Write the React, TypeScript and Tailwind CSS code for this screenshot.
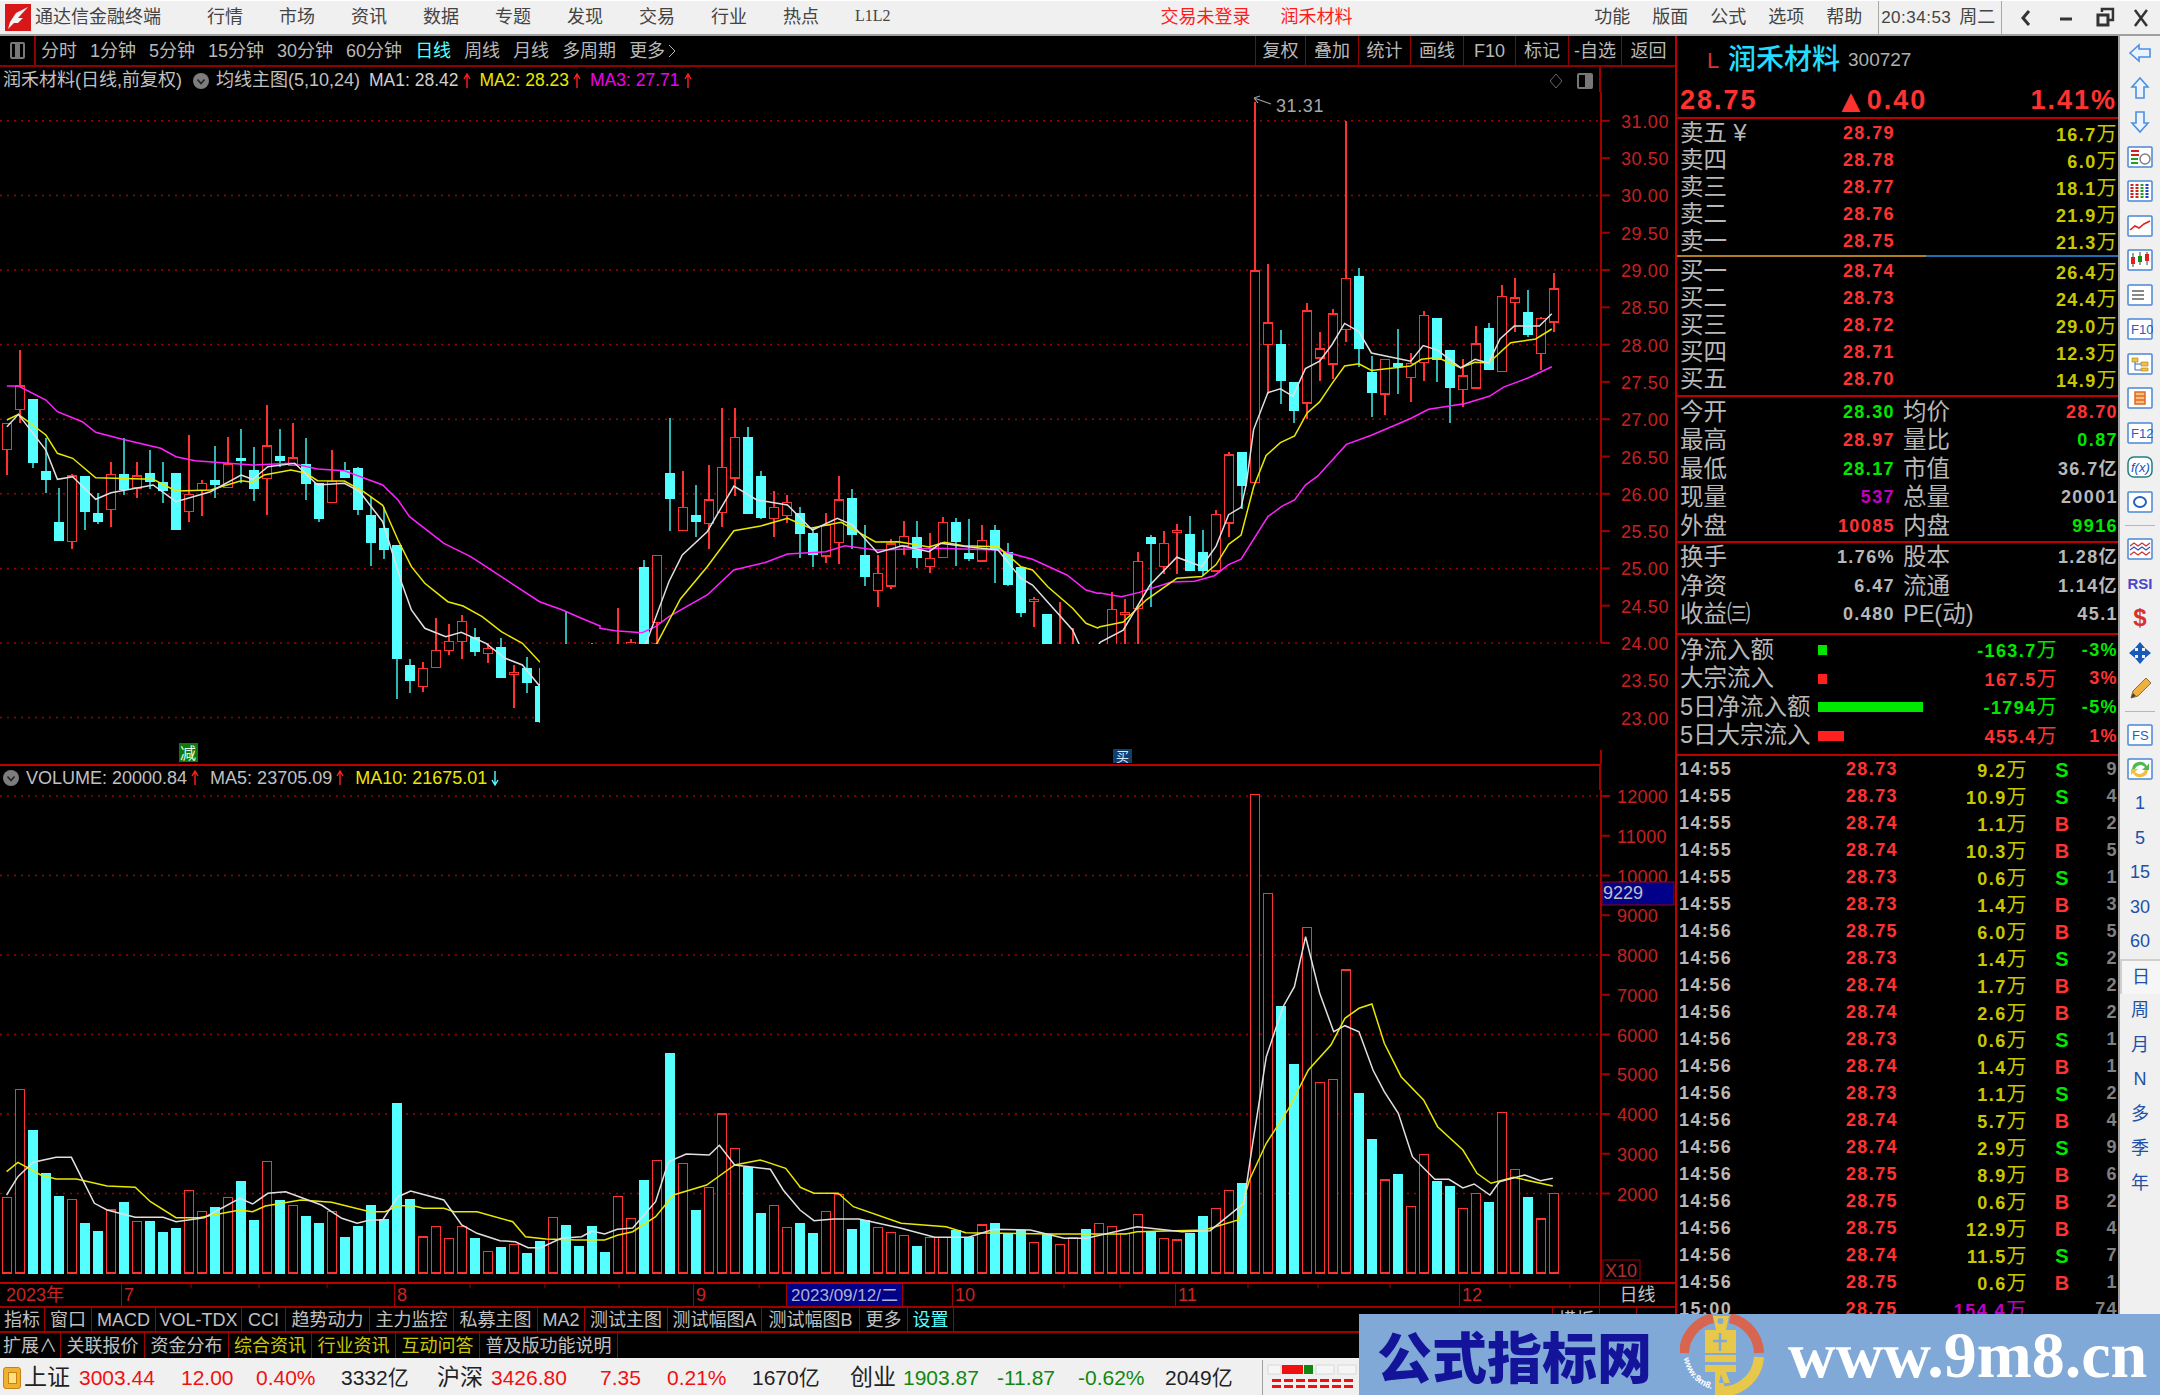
import React from 'react';

const RED = '#ff3232';
const CYAN = '#55ffff';

type C = [string, number, number, number, number];
type P = [number, number];

// candle values are read off the crops: [colour, high, top, bottom, low]
const first: C[] = [
  ['r', 310, 310, 388, 466], ['r', 90, 198, 268, 308], ['c', 238, 238, 430, 445], ['c', 355, 454, 481, 518],
  ['c', 503, 607, 664, 664], ['r', 462, 468, 664, 688], ['c', 467, 467, 575, 630], ['c', 518, 580, 607, 612],
  ['r', 427, 463, 569, 620], ['c', 355, 463, 509, 525], ['r', 427, 468, 504, 534], ['c', 390, 458, 487, 507],
  ['c', 427, 487, 512, 548], ['c', 458, 458, 629, 629], ['r', 346, 523, 574, 606], ['r', 480, 490, 512, 588],
  ['c', 377, 481, 495, 535], ['r', 350, 432, 502, 502], ['c', 327, 413, 422, 490], ['c', 381, 449, 508, 544],
  ['r', 256, 378, 475, 584], ['c', 327, 409, 423, 440], ['r', 310, 414, 436, 436], ['c', 355, 432, 493, 540],
  ['c', 490, 490, 597, 606], ['r', 391, 485, 547, 547], ['c', 427, 450, 475, 475], ['c', 440, 445, 570, 584],
  ['c', 530, 585, 669, 738], ['c', 560, 625, 691, 716], ['c', 676, 676, 1016, 1138], ['c', 1016, 1035, 1083, 1120],
  ['r', 1025, 1045, 1100, 1115], ['r', 895, 991, 1042, 1042], ['r', 912, 965, 992, 1006], ['r', 885, 905, 965, 1016],
  ['c', 925, 950, 997, 1007], ['r', 970, 986, 1001, 1030], ['c', 954, 981, 1075, 1075], ['r', 1035, 1058, 1064, 1165],
  ['c', 1012, 1043, 1088, 1120], ['c', 1043, 1097, 1207, 1210], ['r', 1000, 1010, 1060, 1080], ['c', 873, 1000, 1100, 1150],
  ['c', 1000, 1010, 1060, 1080], ['c', 968, 1010, 1060, 1080], ['c', 1000, 1010, 1060, 1080],
];
const second: C[] = [
  ['r', 625, 760, 790, 800], ['r', 718, 728, 780, 800], ['c', 480, 502, 800, 800], ['r', 467, 467, 667, 800],
  ['c', 55, 218, 298, 393], ['r', 214, 323, 392, 392], ['c', 255, 344, 366, 410], ['r', 196, 300, 370, 446],
  ['r', 25, 202, 337, 380], ['r', 25, 112, 234, 288], ['c', 80, 110, 343, 343], ['c', 214, 227, 353, 357],
  ['r', 272, 323, 356, 410], ['r', 286, 308, 347, 370], ['c', 322, 340, 402, 473], ['c', 385, 398, 464, 500],
  ['r', 340, 377, 468, 488], ['r', 228, 300, 428, 492], ['c', 268, 295, 405, 446], ['c', 376, 466, 532, 559],
  ['r', 465, 521, 572, 621], ['r', 418, 432, 558, 568], ['r', 362, 409, 438, 464], ['c', 362, 412, 473, 505],
  ['r', 398, 476, 499, 518], ['r', 350, 368, 473, 473], ['c', 353, 367, 426, 497], ['c', 358, 458, 478, 483],
  ['r', 376, 422, 483, 483], ['c', 376, 389, 450, 550], ['c', 430, 455, 555, 558], ['c', 502, 502, 640, 650],
  ['r', 590, 598, 604, 680], ['c', 641, 641, 800, 800], ['r', 605, 760, 800, 800], ['r', 683, 760, 800, 800],
  ['c', 760, 770, 800, 800], ['r', 760, 770, 800, 800], ['r', 575, 629, 800, 800], ['r', 597, 638, 644, 800],
  ['r', 457, 485, 625, 800], ['c', 405, 412, 433, 620], ['r', 394, 431, 500, 522], ['r', 372, 391, 397, 522],
  ['c', 349, 403, 514, 514],
];
const third: C[] = [
  ['c', 1216, 1277, 1327, 1340], ['r', 1163, 1174, 1327, 1327], ['r', 1006, 1014, 1197, 1235], ['c', 1005, 1005, 1098, 1160],
  ['r', 60, 516, 1088, 1088], ['r', 497, 657, 715, 850], ['c', 677, 713, 813, 875], ['c', 815, 815, 895, 926],
  ['r', 604, 625, 873, 916], ['r', 680, 727, 751, 814], ['r', 620, 633, 767, 808], ['r', 112, 536, 675, 708],
  ['c', 507, 531, 728, 777], ['c', 745, 790, 846, 911], ['r', 755, 755, 849, 906], ['c', 672, 766, 775, 850],
  ['r', 738, 766, 804, 870], ['r', 624, 637, 763, 813], ['c', 644, 644, 757, 817], ['c', 729, 729, 833, 927],
  ['r', 754, 800, 836, 883], ['r', 664, 714, 832, 832], ['c', 656, 669, 785, 785], ['r', 554, 585, 788, 788],
  ['r', 535, 589, 601, 680], ['c', 567, 628, 688, 696], ['r', 640, 645, 739, 785], ['r', 523, 565, 654, 680],
];

const y8 = (v: number) => 320 + v / 3;
const y9 = (v: number) => 400 + v / 3;
const y7 = (v: number) => 80 + v / 2.703;
const conv = (list: C[], f: (v: number) => number): C[] => list.map(([c, a, b, d, e]) => [c, f(a), f(b), f(d), f(e)]);
const candles: C[] = [...conv(first, y8), ...conv(second, y9), ...conv(third, y7)];
const cx = (i: number) => 7 + 13 * i;

const p8 = (l: P[]) => l.map(([x, y]) => `${(x / 2.613).toFixed(1)},${y8(y).toFixed(1)}`);
const p9 = (l: P[]) => l.map(([x, y]) => `${(600 + x / 2.613).toFixed(1)},${y9(y).toFixed(1)}`);
const p7 = (l: P[]) => l.map(([x, y]) => `${(1100 + x / 2.8).toFixed(1)},${y7(y).toFixed(1)}`);

const magenta = [
  ...p8([[18, 198], [48, 198], [120, 240], [150, 275], [215, 305], [250, 337], [320, 358], [420, 385], [460, 410], [510, 422], [660, 435], [760, 430], [830, 447], [900, 452], [1000, 495], [1040, 540], [1070, 590], [1160, 670], [1230, 710], [1310, 770], [1410, 845], [1470, 870], [1510, 890], [1568, 918]]),
  ...p9([[0, 685], [40, 692], [110, 698], [145, 680], [180, 650], [280, 585], [350, 510], [430, 488], [490, 462], [590, 455], [640, 437], [720, 450], [880, 445], [1040, 450], [1130, 478], [1220, 525], [1270, 570], [1300, 580]]),
  ...p7([[0, 1387], [60, 1397], [110, 1385], [200, 1357], [265, 1355], [320, 1340], [360, 1310], [395, 1295], [470, 1180], [510, 1152], [545, 1135], [575, 1095], [610, 1070], [690, 985], [760, 960], [870, 915], [920, 890], [1020, 875], [1090, 855], [1130, 830], [1200, 805], [1265, 775]]),
].join(' ');
const yellow = [
  ...p8([[18, 300], [48, 283], [120, 345], [150, 400], [190, 415], [250, 473], [400, 478], [460, 513], [550, 510], [630, 482], [660, 487], [690, 465], [760, 450], [800, 460], [830, 482], [900, 483], [950, 515], [1000, 556], [1040, 660], [1075, 740], [1110, 790], [1170, 845], [1210, 858], [1260, 890], [1310, 935], [1365, 970], [1410, 1025]]),
  ...p9([[148, 732], [210, 597], [280, 500], [350, 392], [420, 378], [490, 355], [550, 385], [630, 367], [720, 426], [780, 425], [860, 441], [900, 427], [950, 437], [1040, 440], [1100, 500], [1130, 510], [1170, 560], [1235, 625], [1270, 670], [1300, 684]]),
  ...p7([[0, 1478], [65, 1465], [130, 1405], [215, 1347], [285, 1342], [325, 1310], [360, 1255], [395, 1230], [430, 1100], [465, 1015], [505, 980], [545, 962], [580, 900], [615, 870], [650, 820], [685, 773], [725, 767], [760, 785], [870, 773], [900, 755], [945, 750], [1010, 778], [1050, 763], [1088, 765], [1150, 710], [1220, 700], [1265, 673]]),
].join(' ');
const white = [
  ...p8([[18, 320], [48, 283], [120, 390], [150, 478], [190, 470], [250, 538], [290, 518], [400, 495], [460, 545], [550, 515], [630, 465], [660, 478], [700, 440], [770, 430], [830, 495], [900, 490], [940, 515], [1000, 605], [1050, 790], [1075, 870], [1110, 925], [1165, 950], [1205, 937], [1270, 970], [1320, 1015], [1365, 1035], [1408, 1095]]),
  ...p9([[120, 732], [180, 545], [215, 465], [280, 395], [350, 258], [410, 300], [490, 315], [555, 390], [620, 355], [660, 375], [725, 458], [790, 437], [860, 455], [890, 430], [960, 440], [1040, 450], [1100, 535], [1130, 555], [1235, 690], [1255, 740], [1300, 740]]),
  ...p7([[0, 1520], [65, 1487], [140, 1365], [215, 1290], [285, 1315], [325, 1260], [360, 1175], [395, 1155], [410, 1090], [430, 945], [470, 845], [505, 835], [540, 855], [575, 780], [615, 760], [650, 715], [685, 658], [725, 680], [760, 738], [870, 760], [905, 718], [945, 730], [1010, 778], [1050, 755], [1088, 765], [1120, 700], [1160, 665], [1230, 665], [1265, 632]]),
].join(' ');

// volume bar tops, crop units
const volA = [593, 269, 390, 520, 588, 598, 669, 692, 630, 605, 665, 664, 696, 683, 571, 635, 620, 593, 543, 660, 485, 601, 616, 647, 669, 634, 710, 678, 615, 656, 308, 597, 711, 679, 716, 680, 714, 755, 741, 733, 759, 722, 652, 674, 737, 678, 755, 589, 656, 539, 481, 160, 490, 629, 562, 342, 445, 502, 638, 616, 683];
const volB = [1330, 1360, 1295, 1243, 1347, 1320, 1343, 1358, 1367, 1397, 1372, 1372, 1350, 1372, 1335, 1330, 1360, 1350, 1388, 1362, 1394, 1372, 1348, 1330, 1340, 1360, 1303, 1352, 1375, 1380, 1360, 1307, 1285, 1232, 1208, 43, 340, 677, 852, 443, 907, 898, 570, 938, 1077, 1200, 1181, 1280, 1123, 1202, 1217, 1285, 1240, 1266, 997, 1168, 1252, 1317, 1240];
const volTops = [...volA.map((v) => 1000 + v / 3), ...volB.map((v) => 780 + v / 3)];

const q10 = (l: P[]) => l.map(([x, y]) => `${(x / 1.96).toFixed(1)},${(1000 + y / 3).toFixed(1)}`);
const q11 = (l: P[]) => l.map(([x, y]) => `${(800 + x / 1.78).toFixed(1)},${(780 + y / 3).toFixed(1)}`);
const volWhite = [
  ...q10([[13, 585], [35, 530], [65, 487], [110, 472], [140, 472], [185, 610], [210, 630], [265, 652], [320, 652], [345, 665], [400, 653], [470, 595], [495, 612], [525, 580], [560, 575], [630, 615], [670, 655], [700, 670], [725, 660], [750, 660], [780, 590], [805, 573], [870, 600], [905, 675], [935, 700], [980, 722], [1010, 725], [1035, 743], [1060, 743], [1100, 715], [1140, 710], [1160, 693], [1185, 702], [1210, 688], [1240, 684], [1285, 605], [1310, 485], [1345, 462], [1390, 465], [1410, 436], [1440, 495], [1510, 508], [1535, 570], [1568, 630]]),
  ...q11([[0, 1290], [25, 1322], [60, 1317], [105, 1317], [180, 1345], [240, 1372], [300, 1372], [345, 1348], [410, 1350], [470, 1375], [510, 1375], [600, 1340], [680, 1355], [730, 1352], [790, 1270], [805, 1100], [830, 830], [860, 680], [880, 620], [900, 470], [925, 640], [950, 755], [970, 737], [995, 755], [1020, 870], [1040, 935], [1065, 1000], [1090, 1130], [1130, 1198], [1155, 1198], [1180, 1224], [1200, 1212], [1228, 1245], [1245, 1205], [1290, 1185], [1318, 1202], [1340, 1195]]),
].join(' ');
const volYellow = [
  ...q10([[13, 515], [35, 487], [80, 525], [110, 537], [150, 537], [210, 558], [265, 562], [295, 605], [345, 653], [390, 653], [470, 630], [495, 635], [520, 618], [590, 600], [650, 607], [725, 635], [755, 635], [780, 617], [810, 617], [830, 625], [870, 625], [890, 635], [935, 635], [1005, 665], [1030, 710], [1070, 717], [1130, 720], [1185, 720], [1210, 706], [1240, 695], [1285, 650], [1320, 585], [1385, 555], [1440, 495], [1490, 480], [1540, 505], [1568, 560]]),
  ...q11([[0, 1222], [25, 1240], [68, 1240], [95, 1280], [180, 1330], [260, 1340], [295, 1358], [450, 1362], [580, 1362], [600, 1355], [720, 1350], [780, 1320], [800, 1200], [830, 1090], [870, 985], [905, 870], [945, 795], [970, 715], [995, 685], [1018, 672], [1040, 790], [1070, 890], [1110, 960], [1135, 1040], [1180, 1110], [1205, 1180], [1230, 1210], [1270, 1192], [1340, 1218]]),
].join(' ');

const priceY = (p: number) => 643 - (p - 24) * 74.6;
const numFont = { fontFamily: '"Liberation Sans", "Noto Sans CJK SC", sans-serif' };

const TitleBar = () => (
  <div className="h-[36px] flex items-center bg-[#f0f0f0] border-t border-t-white border-b-2 border-b-[#a0a0a0] text-[18px] text-[#444444]">
    <svg width="26" height="27" viewBox="0 0 26 27" className="ml-[5px]">
      <rect width="26" height="27" fill="#d81818" />
      <path d="M23 3 L11 9 L5 18 L3 25 L9 19 L13 19 L18 14 L13 14 Z" fill="#f4f4f4" />
    </svg>
    <span className="ml-[4px] w-[172px]">通达信金融终端</span>
    <div className="flex gap-[36px] w-[954px]">
      {['行情', '市场', '资讯', '数据', '专题', '发现', '交易', '行业', '热点'].map((t) => (
        <span key={t}>{t}</span>
      ))}
      <span className="text-[16px] font-['Liberation_Serif',serif]">L1L2</span>
    </div>
    <span className="text-[#ff1c1c] w-[120px]">交易未登录</span>
    <span className="text-[#ff1c1c] w-[314px]">润禾材料</span>
    <div className="flex gap-[22px] w-[284px]">
      {['功能', '版面', '公式', '选项', '帮助'].map((t) => (
        <span key={t}>{t}</span>
      ))}
    </div>
    <div className="h-full w-[124px] border-x border-[#a8a8a8] flex items-center pl-[2px] gap-[8px]">
      <span className="text-[17px] tracking-[0.5px] font-['Liberation_Sans',sans-serif]">20:34:53</span>
      <span>周二</span>
    </div>
    <svg width="158" height="24" viewBox="0 0 158 24" className="stroke-[#333333] fill-none">
      <path d="M27 5 L21 12 L27 19" strokeWidth="3" />
      <path d="M58 13 H70" strokeWidth="3" />
      <rect x="96" y="9" width="10" height="10" strokeWidth="3" />
      <path d="M100 6 V3 H111 V14 H107" strokeWidth="2.5" />
      <path d="M133 4 L145 20 M145 4 L133 20" strokeWidth="2.5" />
    </svg>
  </div>
);

const ChartToolbar = () => (
  <div className="h-[31px] flex items-center border-b-2 border-[#8f0000] text-[18px] text-[#b8b8b8]">
    <div className="w-[36px] h-full border-r-2 border-[#8f0000] flex items-center justify-center">
      <div className="w-[15px] h-[17px] border-2 border-[#777777] rounded-[2px] flex justify-center">
        <div className="w-[5px] bg-[#777777]" />
      </div>
    </div>
    <div className="flex items-center gap-[13px] pt-[1px] ml-[5px] w-[1214px] whitespace-nowrap">
      <span>分时</span>
      <span>1分钟</span>
      <span>5分钟</span>
      <span>15分钟</span>
      <span>30分钟</span>
      <span>60分钟</span>
      <span className="text-[#55ffff]">日线</span>
      <span>周线</span>
      <span>月线</span>
      <span>多周期</span>
      <span className="flex items-center gap-[2px]">
        更多
        <svg width="10" height="16" viewBox="0 0 10 16" className="stroke-[#b8b8b8] fill-none">
          <path d="M2 2 L8 8 L2 14" strokeWidth="1" />
        </svg>
      </span>
    </div>
    {[
      ['复权', 'w-[50px]'],
      ['叠加', 'w-[53px]'],
      ['统计', 'w-[52px]'],
      ['画线', 'w-[53px]'],
      ['F10', 'w-[52px]'],
      ['标记', 'w-[53px]'],
      ['-自选', 'w-[53px]'],
      ['返回', 'w-[54px]'],
    ].map(([t, w]) => (
      <span key={t} className={`${w} h-full pt-[1px] flex items-center justify-center border-l border-[#8f0000]`}>
        {t}
      </span>
    ))}
  </div>
);

const Chevron = () => (
  <svg width="16" height="16" viewBox="0 0 16 16">
    <circle cx="8" cy="8" r="8" fill="#7d7d7d" />
    <path d="M4.5 6.5 L8 10.5 L11.5 6.5" stroke="#222222" strokeWidth="1.6" fill="none" />
  </svg>
);

const Arrow = ({ color = '#ff2020', down = false }: { color?: string; down?: boolean }) => (
  <svg width="10" height="16" viewBox="0 0 10 16" className="mx-[3px]">
    <path d={down ? 'M5 1 V14 M2 10 L5 15 L8 10' : 'M5 2 V15 M2 6 L5 1 L8 6'} stroke={color} strokeWidth="1.4" fill="none" />
  </svg>
);

const PriceLegend = () => (
  <div className="h-[25px] w-[1601px] border-r-2 border-[#a00000] flex items-center text-[18px] text-[#c0c0c0] whitespace-nowrap pl-[3px] pt-[2px]">
    <span className="w-[190px]">润禾材料(日线,前复权)</span>
    <Chevron />
    <span className="ml-[7px] w-[153px]">均线主图(5,10,24)</span>
    <span className="text-[17.5px] text-[#d0d0d0]">MA1: 28.42</span>
    <Arrow />
    <span className="ml-[5px] text-[17.5px] text-[#e8e800]">MA2: 28.23</span>
    <Arrow />
    <span className="ml-[5px] text-[17.5px] text-[#f000f0]">MA3: 27.71</span>
    <Arrow />
    <div className="ml-auto mr-[6px] flex items-center gap-[14px]">
      <svg width="14" height="16" viewBox="0 0 14 16">
        <path d="M7 1 L13 8 L7 15 L1 8 Z" stroke="#666666" fill="none" />
      </svg>
      <div className="w-[16px] h-[16px] border-2 border-[#777777] rounded-[2px] flex justify-end">
        <div className="w-[6px] bg-[#777777]" />
      </div>
    </div>
  </div>
);

const PriceChart = () => {
  const grid = [31, 30, 29, 28, 27, 26, 25, 24];
  const labels: string[] = [];
  for (let p = 31; p >= 23; p -= 0.5) labels.push(p.toFixed(2));
  return (
    <svg width="1675" height="672" viewBox="0 92 1675 672" className="block" style={numFont}>
      <defs>
        <clipPath id="cut">
          <path d="M0 92 H1601 V764 H1143 V644 H540 V764 H0 Z" />
        </clipPath>
      </defs>
      {grid.map((p) => (
        <line key={p} x1="0" x2="1600" y1={priceY(p)} y2={priceY(p)} stroke="#a00000" strokeWidth="1.5" strokeDasharray="2 5" />
      ))}
      <line x1="0" x2="535" y1={priceY(23)} y2={priceY(23)} stroke="#a00000" strokeWidth="1.5" strokeDasharray="2 5" />
      <line x1="1601" x2="1601" y1="92" y2="643" stroke="#a00000" strokeWidth="2" />
      <line x1="1601" x2="1601" y1="750" y2="764" stroke="#a00000" strokeWidth="2" />
      {labels.map((t) => {
        const y = priceY(Number(t));
        return (
          <g key={t}>
            {Number(t) >= 24 && <line x1="1601" x2="1610" y1={y} y2={y} stroke="#a00000" strokeWidth="2" />}
            <text x="1621" y={y + 7} fontSize="18" fill="#c82020" letterSpacing="0.6">
              {t}
            </text>
          </g>
        );
      })}
      <g clipPath="url(#cut)">
        {candles.map(([c, hi, top, bot, lo], i) => {
          const x = cx(i);
          if (c === 'c') {
            return (
              <g key={i} shapeRendering="crispEdges">
                <line x1={x} x2={x} y1={hi} y2={lo} stroke="#2fb4b4" strokeWidth="1.5" />
                <rect x={x - 5} y={top} width="10" height={bot - top} fill={CYAN} />
              </g>
            );
          }
          return (
            <g key={i} shapeRendering="crispEdges">
              <line x1={x} x2={x} y1={hi} y2={lo} stroke={RED} strokeWidth="1.5" />
              <rect x={x - 4.5} y={top} width="9" height={bot - top} fill="#000000" stroke={RED} strokeWidth="1.5" />
            </g>
          );
        })}
        <polyline points={magenta} fill="none" stroke="#ff22ff" strokeWidth="1.5" />
        <polyline points={yellow} fill="none" stroke="#e8e800" strokeWidth="1.5" />
        <polyline points={white} fill="none" stroke="#e0e0e0" strokeWidth="1.5" />
      </g>
      <path d="M1254 98 L1271 104 M1254 98 L1260 96 M1254 98 L1258 103" stroke="#a0a0a0" strokeWidth="1.2" fill="none" />
      <text x="1276" y="112" fontSize="18" fill="#a8a8a8" letterSpacing="0.6">
        31.31
      </text>
      <rect x="179" y="743" width="19" height="19" fill="#0e7a0e" />
      <text x="180" y="759" fontSize="16" fill="#e8ffe8" fontFamily='"Noto Sans CJK SC", sans-serif'>
        减
      </text>
      <rect x="1113" y="749" width="19" height="14" fill="#10406e" />
      <text x="1116" y="761" fontSize="13" fill="#d8e8ff" fontFamily='"Noto Sans CJK SC", sans-serif'>
        买
      </text>
    </svg>
  );
};

const VolumeLegend = () => (
  <div className="h-[26px] w-[1601px] border-t-2 border-t-[#c00000] border-r-2 border-r-[#a00000] flex items-center text-[18px] text-[#c0c0c0] whitespace-nowrap pl-[3px]">
    <Chevron />
    <span className="ml-[7px]">VOLUME: 20000.84</span>
    <Arrow />
    <span className="ml-[7px]">MA5: 23705.09</span>
    <Arrow />
    <span className="ml-[7px] text-[#e8e800]">MA10: 21675.01</span>
    <Arrow color="#55ffff" down />
  </div>
);

const VolumeChart = () => {
  const ticks = [12000, 11000, 10000, 9000, 8000, 7000, 6000, 5000, 4000, 3000, 2000];
  const vy = (v: number) => 1273 - (v / 1000) * 39.75;
  return (
    <svg width="1675" height="492" viewBox="0 790 1675 492" className="block" style={numFont}>
      {[12000, 10000, 8000, 6000, 4000, 2000].map((v) => (
        <line key={v} x1="0" x2="1600" y1={vy(v)} y2={vy(v)} stroke="#a00000" strokeWidth="1.5" strokeDasharray="2 5" />
      ))}
      <line x1="1601" x2="1601" y1="790" y2="1282" stroke="#a00000" strokeWidth="2" />
      {ticks.map((v) => (
        <g key={v}>
          <line x1="1601" x2="1610" y1={vy(v)} y2={vy(v)} stroke="#a00000" strokeWidth="2" />
          <text x="1617" y={vy(v) + 7} fontSize="18" fill="#c82020" letterSpacing="0.2">
            {v}
          </text>
        </g>
      ))}
      <rect x="1602" y="882" width="72" height="23" fill="#000088" stroke="#a00000" />
      <text x="1603" y="899" fontSize="18" fill="#c0c0c0">
        9229
      </text>
      <rect x="1603" y="1260" width="37" height="20" fill="#000000" stroke="#a00000" />
      <text x="1605" y="1277" fontSize="18" fill="#b03030">
        X10
      </text>
      {volTops.map((top, i) => {
        const x = cx(i);
        const cyan = candles[i][0] === 'c';
        return cyan ? (
          <rect key={i} x={x - 5} y={top} width="10" height={1273.5 - top} fill={CYAN} shapeRendering="crispEdges" />
        ) : (
          <rect key={i} x={x - 4.5} y={top} width="9" height={1273 - top} fill="#000000" stroke={RED} strokeWidth="1.5" shapeRendering="crispEdges" />
        );
      })}
      <polyline points={volYellow} fill="none" stroke="#e8e800" strokeWidth="1.5" />
      <polyline points={volWhite} fill="none" stroke="#e0e0e0" strokeWidth="1.5" />
    </svg>
  );
};

const DateRow = () => {
  const months: [string, string][] = [
    ['2023年', 'w-[122px]'],
    ['7', 'w-[273px]'],
    ['8', 'w-[299px]'],
    ['9', 'w-[93px]'],
  ];
  const rest: [string, string][] = [
    ['', 'w-[50px]'],
    ['10', 'w-[223px]'],
    ['11', 'w-[284px]'],
    ['12', 'w-[140px]'],
  ];
  const cell = (t: string, w: string) => (
    <span key={t + w} className={`${w} h-full pt-[1px] flex items-center ${t === '2023年' ? 'pl-[6px]' : 'pl-[2px]'} border-r border-[#a00000]`}>
      {t}
    </span>
  );
  return (
    <div className="relative h-[24px] flex border-t-2 border-[#c00000] text-[18px] text-[#d02020] whitespace-nowrap">
      {months.map(([t, w]) => cell(t, w))}
      <span className="w-[116px] h-full pt-[1px] flex items-center justify-center bg-[#000088] text-[#b0b0d0] text-[17px] border-r border-[#a00000]">
        2023/09/12/二
      </span>
      {rest.map(([t, w]) => cell(t, w))}
      <span className="flex-1 h-full pt-[1px] flex items-center justify-center text-[#c0c0c0]">日线</span>
      <svg width="1601" height="4" className="absolute left-0 top-0">
        {[191, 259, 327, 470, 545, 619, 759, 1064, 1120, 1248, 1318, 1390, 1510, 1570].map((x) => (
          <line key={x} x1={x} x2={x} y1="0" y2="4" stroke="#a00000" />
        ))}
      </svg>
    </div>
  );
};

const Tabs = ({ items, h }: { items: [string, string, string?][]; h: string }) => (
  <div className={`${h} flex border-t-2 border-[#a00000] text-[18px] text-[#c0c0c0] whitespace-nowrap`}>
    {items.map(([t, w, color]) => (
      <span key={t} className={`${w} ${color ?? ''} h-full pt-[1px] flex items-center justify-center border-r border-[#a00000]`}>
        {t}
      </span>
    ))}
  </div>
);

const Wan = () => <span className="text-[20px] font-normal">万</span>;

const Label = ({ children }: { children: React.ReactNode }) => (
  <span className="text-[23.5px] text-[#b8b8b8] whitespace-nowrap">{children}</span>
);
const Num = ({ children, className }: { children: React.ReactNode; className: string }) => (
  <span className={`${className} text-[18px] font-bold tracking-[1.4px] whitespace-nowrap`}>{children}</span>
);

const Book = ({ label, price, vol }: { label: string; price: string; vol: string }) => (
  <div className="h-[27px] flex items-center">
    <div className="w-[218px] pl-[3px] flex items-center justify-between">
      <Label>{label}</Label>
      <Num className="text-[#ff3232]">{price}</Num>
    </div>
    <div className="flex-1 text-right leading-none">
      <Num className="text-[#c8c800]">
        {vol}
        <Wan />
      </Num>
    </div>
  </div>
);

const Quote = ({ a, v1, c1, b, v2, c2 }: { a: string; v1: string; c1: string; b: string; v2: string; c2: string }) => (
  <div className="h-[28.5px] flex items-center">
    <div className="w-[218px] pl-[3px] flex items-center justify-between">
      <Label>{a}</Label>
      <Num className={c1}>{v1}</Num>
    </div>
    <div className="flex-1 pl-[8px] flex items-center justify-between">
      <Label>{b}</Label>
      <Num className={c2}>{v2}</Num>
    </div>
  </div>
);

const Flow = ({ label, bar, amount, pct, green }: { label: string; bar: string; amount: string; pct: string; green: boolean }) => {
  const color = green ? 'text-[#00e800]' : 'text-[#ff3232]';
  return (
    <div className="h-[28.6px] flex items-center">
      <div className="w-[141px] pl-[3px]">
        <Label>{label}</Label>
      </div>
      <div className="w-[146px] flex items-center">
        <div className={`${bar} h-[10px] ${green ? 'bg-[#00e800]' : 'bg-[#ff2020]'}`} />
      </div>
      <div className="w-[94px] text-right leading-none">
        <Num className={color}>
          {amount}
          <Wan />
        </Num>
      </div>
      <div className="flex-1 text-right">
        <Num className={color}>{pct}</Num>
      </div>
    </div>
  );
};

const trades: [string, string, string, string, string][] = [
  ['14:55', '28.73', '9.2', 'S', '9'],
  ['14:55', '28.73', '10.9', 'S', '4'],
  ['14:55', '28.74', '1.1', 'B', '2'],
  ['14:55', '28.74', '10.3', 'B', '5'],
  ['14:55', '28.73', '0.6', 'S', '1'],
  ['14:55', '28.73', '1.4', 'B', '3'],
  ['14:56', '28.75', '6.0', 'B', '5'],
  ['14:56', '28.73', '1.4', 'S', '2'],
  ['14:56', '28.74', '1.7', 'B', '2'],
  ['14:56', '28.74', '2.6', 'B', '2'],
  ['14:56', '28.73', '0.6', 'S', '1'],
  ['14:56', '28.74', '1.4', 'B', '1'],
  ['14:56', '28.73', '1.1', 'S', '2'],
  ['14:56', '28.74', '5.7', 'B', '4'],
  ['14:56', '28.74', '2.9', 'S', '9'],
  ['14:56', '28.75', '8.9', 'B', '6'],
  ['14:56', '28.75', '0.6', 'B', '2'],
  ['14:56', '28.75', '12.9', 'B', '4'],
  ['14:56', '28.74', '11.5', 'S', '7'],
  ['14:56', '28.75', '0.6', 'B', '1'],
  ['15:00', '28.75', '154.4', '', '74'],
];

const Panel = () => (
  <div className="w-[441px] h-full overflow-hidden flex flex-col">
    <div className="h-[48px] shrink-0 flex items-center pl-[30px] whitespace-nowrap">
      <span className="text-[22px] text-[#e03030] w-[21px]">L</span>
      <span className="text-[28px] font-medium text-[#22ddff] leading-none">润禾材料</span>
      <span className="ml-[8px] text-[19px] text-[#b0b0b0] font-['Liberation_Sans',sans-serif]">300727</span>
    </div>
    <div className="h-[35px] shrink-0 flex items-center text-[27px] font-bold tracking-[2px] text-[#ff3232] border-b-2 border-[#c00000] whitespace-nowrap">
      <span className="w-[158px] pl-[3px]">28.75</span>
      <span className="flex-1 flex items-center">
        <span className="text-[32px] leading-none tracking-normal">▲</span>
        0.40
      </span>
      <span className="pr-[1px]">1.41%</span>
    </div>
    <div className="h-[1px] shrink-0" />
    {[
      ['卖五 ¥', '28.79', '16.7'],
      ['卖四', '28.78', '6.0'],
      ['卖三', '28.77', '18.1'],
      ['卖二', '28.76', '21.9'],
      ['卖一', '28.75', '21.3'],
    ].map(([a, b, c]) => (
      <Book key={a} label={a} price={b} vol={c} />
    ))}
    <div className="h-[2px] mb-[1px] flex shrink-0">
      <div className="w-[249px] bg-[#b08020]" />
      <div className="flex-1 bg-[#2070b0]" />
    </div>
    {[
      ['买一', '28.74', '26.4'],
      ['买二', '28.73', '24.4'],
      ['买三', '28.72', '29.0'],
      ['买四', '28.71', '12.3'],
      ['买五', '28.70', '14.9'],
    ].map(([a, b, c]) => (
      <Book key={a} label={a} price={b} vol={c} />
    ))}
    <div className="h-[2px] mt-[2px] mb-[1px] shrink-0 bg-[#c00000]" />
    <Quote a="今开" v1="28.30" c1="text-[#00e800]" b="均价" v2="28.70" c2="text-[#ff3232]" />
    <Quote a="最高" v1="28.97" c1="text-[#ff3232]" b="量比" v2="0.87" c2="text-[#00e800]" />
    <Quote a="最低" v1="28.17" c1="text-[#00e800]" b="市值" v2="36.7亿" c2="text-[#b8b8b8]" />
    <Quote a="现量" v1="537" c1="text-[#c000c0]" b="总量" v2="20001" c2="text-[#b8b8b8]" />
    <Quote a="外盘" v1="10085" c1="text-[#ff3232]" b="内盘" v2="9916" c2="text-[#00e800]" />
    <div className="h-[2px] mb-[1px] shrink-0 bg-[#c00000]" />
    <Quote a="换手" v1="1.76%" c1="text-[#b8b8b8]" b="股本" v2="1.28亿" c2="text-[#b8b8b8]" />
    <Quote a="净资" v1="6.47" c1="text-[#b8b8b8]" b="流通" v2="1.14亿" c2="text-[#b8b8b8]" />
    <Quote a="收益㈢" v1="0.480" c1="text-[#b8b8b8]" b="PE(动)" v2="45.1" c2="text-[#b8b8b8]" />
    <div className="h-[2px] mt-[4px] mb-[1px] shrink-0 bg-[#c00000]" />
    <Flow label="净流入额" bar="w-[9px]" amount="-163.7" pct="-3%" green />
    <Flow label="大宗流入" bar="w-[9px]" amount="167.5" pct="3%" green={false} />
    <Flow label="5日净流入额" bar="w-[105px]" amount="-1794" pct="-5%" green />
    <Flow label="5日大宗流入" bar="w-[26px]" amount="455.4" pct="1%" green={false} />
    <div className="h-[2px] mt-[4px] shrink-0 bg-[#c00000]" />
    {trades.map(([t, p, v, side, n], i) => (
      <div key={i} className="h-[27px] shrink-0 flex items-center">
        <div className="w-[221px] pl-[2px] flex items-center justify-between">
          <Num className="text-[#b8b8b8]">{t}</Num>
          <Num className="text-[#ff3232]">{p}</Num>
        </div>
        <div className="w-[130px] text-right leading-none">
          <Num className={side === '' ? 'text-[#c000c0]' : 'text-[#c8c800]'}>
            {v}
            <Wan />
          </Num>
        </div>
        <span className={`w-[68px] text-center text-[20px] font-bold ${side === 'S' ? 'text-[#00e800]' : 'text-[#ff3232]'}`}>{side}</span>
        <div className="flex-1 text-right">
          <Num className="text-[#808080]">{n}</Num>
        </div>
      </div>
    ))}
  </div>
);

const Box = ({ children }: { children?: React.ReactNode }) => (
  <svg width="26" height="22" viewBox="0 0 26 22">
    <rect x="1" y="1" width="24" height="20" fill="#ffffff" stroke="#4a86d8" strokeWidth="1.5" rx="1" />
    {children}
  </svg>
);

const SideCell = ({ children, active }: { children: React.ReactNode; active?: boolean }) => (
  <div
    className={`h-[34.5px] flex items-center justify-center ${
      active ? 'bg-[#f6f6f6] border-l-2 border-t-2 border-[#d0d0d0]' : ''
    }`}
  >
    {children}
  </div>
);

const SideSep = () => (
  <div className="h-[13px] flex items-center px-[5px]">
    <div className="h-[1px] w-full bg-[#b8b8b8]" />
  </div>
);

const BigArrow = ({ d }: { d: string }) => (
  <svg width="26" height="26" viewBox="0 0 26 26">
    <path d={d} fill="#eaf3ff" stroke="#4a90e0" strokeWidth="1.6" />
  </svg>
);

const Sidebar = () => (
  <div className="flex-1 h-full bg-[#f0f0f0] flex flex-col text-[18px] text-[#2050a8] text-center">
    <SideCell>
      <BigArrow d="M3 13 L12 5 V9 H23 V17 H12 V21 Z" />
    </SideCell>
    <SideCell>
      <BigArrow d="M13 3 L21 12 H17 V23 H9 V12 H5 Z" />
    </SideCell>
    <SideCell>
      <BigArrow d="M13 23 L21 14 H17 V3 H9 V14 H5 Z" />
    </SideCell>
    <SideCell>
      <Box>
        <path d="M4 5 H12 M4 9 H12" stroke="#d02020" strokeWidth="2" />
        <path d="M4 13 H11 M4 17 H11" stroke="#20a020" strokeWidth="2" />
        <circle cx="18" cy="13" r="5" fill="none" stroke="#808080" strokeWidth="1.5" />
      </Box>
    </SideCell>
    <SideCell>
      <Box>
        <path d="M5 4 V18 M10 4 V18" stroke="#d02020" strokeWidth="3" strokeDasharray="2 1" />
        <path d="M15 4 V18" stroke="#20a020" strokeWidth="3" strokeDasharray="2 1" />
        <path d="M20 4 V18" stroke="#2040d0" strokeWidth="3" strokeDasharray="2 1" />
      </Box>
    </SideCell>
    <SideCell>
      <Box>
        <path d="M3 15 L8 11 L12 13 L17 9 L23 6" stroke="#e02020" strokeWidth="1.6" fill="none" />
      </Box>
    </SideCell>
    <SideCell>
      <Box>
        <path d="M6 4 V18 M13 3 V16 M20 3 V16" stroke="#404040" strokeWidth="1" />
        <rect x="4" y="8" width="4" height="7" fill="#e02020" />
        <rect x="11" y="7" width="4" height="6" fill="#109010" />
        <rect x="18" y="5" width="4" height="7" fill="#e02020" />
      </Box>
    </SideCell>
    <SideCell>
      <Box>
        <path d="M5 7 H17 M5 11 H17 M5 15 H17" stroke="#606060" strokeWidth="1.6" />
      </Box>
    </SideCell>
    <SideCell>
      <Box>
        <text x="4" y="16" fontSize="13" fill="#2060c0" style={numFont}>
          F10
        </text>
      </Box>
    </SideCell>
    <SideCell>
      <Box>
        <path d="M5 5 H11 V9 H5 Z M14 9 H21 V13 H14 Z M14 15 H21 V18 H14 Z" fill="#f0c040" stroke="#b08010" strokeWidth="0.6" />
        <path d="M8 9 V17 H14 M8 11 H14" stroke="#3070c0" fill="none" />
      </Box>
    </SideCell>
    <SideCell>
      <Box>
        <path d="M8 5 H18 V17 H8 Z M8 9 H18 M8 13 H18" fill="#f8c080" stroke="#e06820" strokeWidth="1.5" />
      </Box>
    </SideCell>
    <SideCell>
      <Box>
        <text x="4" y="16" fontSize="13" fill="#2060c0" style={numFont}>
          F12
        </text>
      </Box>
    </SideCell>
    <SideCell>
      <svg width="26" height="22" viewBox="0 0 26 22">
        <rect x="1" y="1" width="24" height="20" rx="6" fill="#ffffff" stroke="#208080" strokeWidth="1.5" />
        <text x="4" y="16" fontSize="13" fontStyle="italic" fill="#2050c0" style={numFont}>
          f(x)
        </text>
      </svg>
    </SideCell>
    <SideCell>
      <Box>
        <ellipse cx="13" cy="11" rx="6" ry="5" fill="none" stroke="#2060c0" strokeWidth="2" />
      </Box>
    </SideCell>
    <SideSep />
    <SideCell>
      <Box>
        <path d="M3 8 L7 5 L11 8 L15 5 L19 8 L23 5" stroke="#d03030" strokeWidth="1.2" fill="none" />
        <path d="M3 12 L7 9 L11 12 L15 9 L19 12 L23 9" stroke="#3050c0" strokeWidth="1.2" fill="none" />
        <path d="M3 17 L7 14 L11 17 L15 14 L19 17 L23 14" stroke="#d03030" strokeWidth="1.2" fill="none" />
      </Box>
    </SideCell>
    <SideCell>
      <span className="text-[15px] font-bold text-[#4848c8] font-['Liberation_Sans',sans-serif]">RSI</span>
    </SideCell>
    <SideCell>
      <span className="text-[24px] font-bold text-[#d83030] font-['Liberation_Sans',sans-serif]">$</span>
    </SideCell>
    <SideCell>
      <svg width="26" height="26" viewBox="0 0 26 26">
        <path d="M13 2 L18 8 H15 V11 H18 V8 L24 13 L18 18 V15 H15 V18 H18 L13 24 L8 18 H11 V15 H8 V18 L2 13 L8 8 V11 H11 V8 H8 Z" fill="#1858b8" />
      </svg>
    </SideCell>
    <SideCell>
      <svg width="26" height="26" viewBox="0 0 26 26">
        <path d="M4 24 L6 17 L19 4 L24 9 L11 22 Z" fill="#f0b040" stroke="#907030" strokeWidth="1" />
        <path d="M4 24 L6 19 L9 22 Z" fill="#404040" />
      </svg>
    </SideCell>
    <SideSep />
    <SideCell>
      <Box>
        <text x="5" y="16" fontSize="13" fill="#2060c0" style={numFont}>
          FS
        </text>
      </Box>
    </SideCell>
    <SideCell>
      <Box>
        <path d="M5 11 A8 8 0 0 1 20 8 L22 5 V12 H15 L18 9 A6 6 0 0 0 8 11 Z" fill="#50b850" />
        <path d="M21 12 A8 8 0 0 1 6 15 L4 17 V11 H11 L8 14 A6 6 0 0 0 18 12 Z" fill="#f0c040" />
      </Box>
    </SideCell>
    {['1', '5', '15', '30', '60'].map((t) => (
      <SideCell key={t}>{t}</SideCell>
    ))}
    <SideCell active>日</SideCell>
    {['周', '月', 'N', '多', '季', '年'].map((t) => (
      <SideCell key={t}>{t}</SideCell>
    ))}
  </div>
);

const StatusBar = () => {
  const items: [string, string, string][] = [
    ['上证', 'w-[55px] text-[23px]', 'text-[#222222]'],
    ['3003.44', 'w-[102px]', 'text-[#f01010]'],
    ['12.00', 'w-[75px]', 'text-[#f01010]'],
    ['0.40%', 'w-[85px]', 'text-[#f01010]'],
    ['3332亿', 'w-[96px]', 'text-[#222222]'],
    ['沪深', 'w-[54px] text-[23px]', 'text-[#222222]'],
    ['3426.80', 'w-[109px]', 'text-[#f01010]'],
    ['7.35', 'w-[67px]', 'text-[#f01010]'],
    ['0.21%', 'w-[85px]', 'text-[#f01010]'],
    ['1670亿', 'w-[98px]', 'text-[#222222]'],
    ['创业', 'w-[53px] text-[23px]', 'text-[#222222]'],
    ['1903.87', 'w-[94px]', 'text-[#108810]'],
    ['-11.87', 'w-[81px]', 'text-[#108810]'],
    ['-0.62%', 'w-[87px]', 'text-[#108810]'],
    ['2049亿', 'w-[97px]', 'text-[#222222]'],
  ];
  return (
    <div className="h-[37px] flex items-center bg-[#f0f0f0] text-[21px] whitespace-nowrap pt-[2px]">
      <div className="w-[24px] flex justify-center">
        <div className="w-[18px] h-[22px] rounded-[3px] bg-[#f0b030] border border-[#c88010] flex items-center justify-center">
          <div className="w-[9px] h-[12px] bg-[#ffe080] border border-[#c88010]" />
        </div>
      </div>
      {items.map(([t, w, c]) => (
        <span key={t} className={`${w} ${c}`}>
          {t}
        </span>
      ))}
      <div className="h-full border-l border-[#a0a0a0]">
        <svg width="100" height="35" viewBox="0 0 100 35">
          <rect x="5" y="5" width="13" height="9" fill="#f6f6f6" stroke="#d8d8d8" />
          <rect x="19" y="5" width="21" height="9" fill="#f01010" />
          <rect x="41" y="5" width="9" height="9" fill="#108810" />
          <rect x="53" y="5" width="18" height="9" fill="#f6f6f6" stroke="#d8d8d8" />
          <rect x="75" y="5" width="18" height="9" fill="#f6f6f6" stroke="#d8d8d8" />
          {[0, 1, 2, 3, 4, 5, 6].map((i) => (
            <g key={i}>
              <rect x={9 + i * 12} y="19" width="9" height="3" fill="#f01010" />
              <rect x={9 + i * 12} y="25" width="9" height="3" fill="#f01010" />
            </g>
          ))}
        </svg>
      </div>
    </div>
  );
};

const Banner = () => (
  <div className="absolute right-0 bottom-0 w-[801px] h-[81px] bg-[#80a9d8] flex items-center whitespace-nowrap">
    <span className="ml-[18px] w-[303px] text-[55px] leading-none font-black text-[#14149a] font-['Noto_Sans_CJK_SC',sans-serif]">
      公式指标网
    </span>
    <svg width="84" height="81" viewBox="0 3 84 81" className="shrink-0">
      <path d="M4 42 A37 37 0 0 1 33 7" fill="none" stroke="#d8654f" strokeWidth="10" />
      <path d="M50 7 A37 37 0 0 1 79 42" fill="none" stroke="#d8654f" strokeWidth="10" />
      <path d="M79 46 A37 37 0 0 1 36 80" fill="none" stroke="#e8c84a" strokeWidth="10" />
      <path d="M33 5 H49 L46 19 H56 V42 H25 V19 H36 Z" fill="#e8c84a" />
      <rect x="25" y="44" width="31" height="7" fill="#e8c84a" />
      <rect x="25" y="54" width="31" height="7" fill="#e8c84a" />
      <path d="M35 61 H46 L50 72 H44 L41 63 L39 72 H35 Z M35 72 H44 V84 H35 Z" fill="#e8c84a" />
      <path d="M33 30 H47 M40 22 V40" stroke="#80a9d8" strokeWidth="2.5" />
      <circle cx="40.5" cy="10" r="3" fill="#80a9d8" />
      <path id="ring" d="M4 47 A37 37 0 0 0 32 78" fill="none" />
      <text fontSize="9" fontWeight="700" fill="#ffffff" style={numFont}>
        <textPath href="#ring">www.9m8.cn</textPath>
      </text>
    </svg>
    <span className="ml-[24px] text-[66px] leading-none font-bold text-white font-['Liberation_Serif',serif]">www.9m8.cn</span>
  </div>
);

export default function App() {
  return (
    <div className="relative w-[2160px] h-[1395px] overflow-hidden bg-black flex flex-col font-['Liberation_Sans','Noto_Sans_CJK_SC',sans-serif]">
      <TitleBar />
      <div className="flex h-[1322px] shrink-0">
        <div className="w-[1675px] flex flex-col">
          <ChartToolbar />
          <PriceLegend />
          <PriceChart />
          <VolumeLegend />
          <VolumeChart />
          <DateRow />
          <Tabs
            h="h-[25px]"
            items={[
              ['指标', 'w-[45px]'],
              ['窗口', 'w-[47px]'],
              ['MACD', 'w-[64px]'],
              ['VOL-TDX', 'w-[86px]'],
              ['CCI', 'w-[44px]'],
              ['趋势动力', 'w-[84px]'],
              ['主力监控', 'w-[84px]'],
              ['私募主图', 'w-[84px]'],
              ['MA2', 'w-[47px]'],
              ['测试主图', 'w-[83px]'],
              ['测试幅图A', 'w-[94px]'],
              ['测试幅图B', 'w-[98px]'],
              ['更多', 'w-[48px]'],
              ['设置', 'w-[46px]', 'text-[#55ffff]'],
              ['', 'w-[599px]'],
              ['横板', 'w-[47px]'],
              ['▲', 'w-[37px]'],
            ]}
          />
          <Tabs
            h="h-[27px]"
            items={[
              ['扩展∧', 'w-[61px]'],
              ['关联报价', 'w-[84px]'],
              ['资金分布', 'w-[84px]'],
              ['综合资讯', 'w-[83px]', 'text-[#c8c800]'],
              ['行业资讯', 'w-[84px]', 'text-[#c8c800]'],
              ['互动问答', 'w-[84px]', 'text-[#c8c800]'],
              ['普及版功能说明', 'w-[138px]'],
            ]}
          />
        </div>
        <div className="w-[2px] bg-[#c00000] shrink-0" />
        <Panel />
        <div className="w-[2px] bg-[#a0a0a0] shrink-0" />
        <Sidebar />
      </div>
      <StatusBar />
      <Banner />
    </div>
  );
}
